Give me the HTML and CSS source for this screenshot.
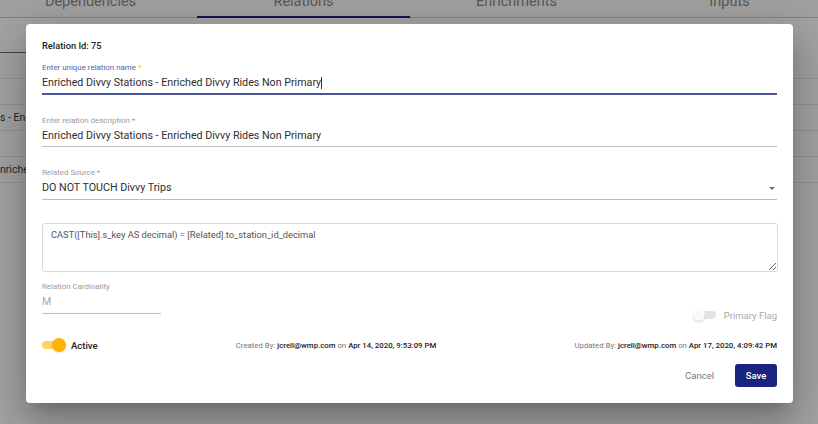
FILE: index.html
```html
<!DOCTYPE html>
<html>
<head>
<meta charset="utf-8">
<link rel="stylesheet" href="styles.css">
</head>
<body>
<div class="page">
  <div class="tabs">
    <div class="tab">Dependencies</div>
    <div class="tab active">Relations</div>
    <div class="tab">Enrichments</div>
    <div class="tab">Inputs</div>
  </div>
  <div class="toolbar"><span class="search"></span></div>
  <div class="table">
    <div class="row head"></div>
    <div class="row"></div>
    <div class="row"><span class="cell">s - Enri</span></div>
    <div class="row"></div>
    <div class="row"><span class="cell">nriche</span></div>
  </div>
</div>
<div class="overlay"></div>
<div class="dialog">
  <div class="title">Relation Id: 75</div>

  <div class="field focused">
    <div class="label">Enter unique relation name <span class="req">*</span></div>
    <div class="value">Enriched Divvy Stations - Enriched Divvy Rides Non Primary<span class="caret"></span></div>
  </div>

  <div class="field">
    <div class="label">Enter relation description *</div>
    <div class="value">Enriched Divvy Stations - Enriched Divvy Rides Non Primary</div>
  </div>

  <div class="field select">
    <div class="label">Related Source *</div>
    <div class="value"><span>DO NOT TOUCH Divvy Trips</span><span class="arrow"></span></div>
  </div>

  <textarea class="expr" readonly>CAST([This].s_key AS decimal) = [Related].to_station_id_decimal</textarea>

  <div class="row-card">
    <div class="field small disabled">
      <div class="label">Relation Cardinality</div>
      <div class="value">M</div>
    </div>
    <div class="flag">
      <span class="switch off"><span class="knob"></span></span>
      <span class="flag-text">Primary Flag</span>
    </div>
  </div>

  <div class="meta-row">
    <div class="active">
      <span class="switch on"><span class="knob"></span></span>
      <span class="active-text">Active</span>
    </div>
    <div class="meta"><span class="k">Created By:</span> <b>jcrell@wmp.com</b> <span class="k">on</span> <b>Apr 14, 2020, 9:53:09 PM</b></div>
    <div class="meta"><span class="k">Updated By:</span> <b>jcrell@wmp.com</b> <span class="k">on</span> <b>Apr 17, 2020, 4:09:42 PM</b></div>
  </div>

  <div class="actions">
    <button class="btn cancel">Cancel</button>
    <button class="btn save">Save</button>
  </div>
</div>
</body>
</html>
```
FILE: styles.css
```css
* { box-sizing: border-box; }
html, body {
  margin: 0;
  width: 818px;
  height: 424px;
  overflow: hidden;
  font-family: Roboto, "Liberation Sans", sans-serif;
  background: #fff;
}
body { position: relative; }

.page { width: 818px; }
.tabs {
  display: flex;
  margin-top: -15px;
  margin-left: -16px;
  height: 33px;
  border-bottom: 1px solid #c8c8c8;
  background: #fafafa;
}
.tab {
  width: 213px;
  flex: none;
  display: flex;
  align-items: center;
  justify-content: center;
  font-size: 14.5px;
  color: #8a8a8a;
  position: relative;
}
.tab.active::after {
  content: "";
  position: absolute;
  left: 0; right: 0; bottom: -1px;
  height: 2px;
  background: #1a237e;
}
.toolbar {
  height: 35px;
  display: flex;
  align-items: flex-end;
}
.search {
  width: 200px;
  height: 1px;
  background: #666;
}
.table { display: flex; flex-direction: column; }
.row {
  height: 26px;
  border-bottom: 1px solid #e3e3e3;
  display: flex;
  align-items: center;
  font-size: 10.5px;
  color: #3a3a3a;
}
.row.head { background: #fdfdfd; }
.cell { white-space: nowrap; width: 26px; overflow: hidden; }

.overlay {
  position: absolute;
  inset: 0;
  background: rgba(0,0,0,0.36);
}

.dialog {
  position: absolute;
  left: 26px;
  top: 24px;
  width: 767px;
  height: 379px;
  background: #fff;
  border-radius: 4px;
  box-shadow: 0 11px 15px -7px rgba(0,0,0,.2), 0 24px 38px 3px rgba(0,0,0,.14), 0 9px 46px 8px rgba(0,0,0,.12);
  padding: 16px 16px 0 16px;
  display: flex;
  flex-direction: column;
}
.title {
  font-size: 9.3px;
  font-weight: 500;
  line-height: 12px;
  color: #222;
}
.field { display: flex; flex-direction: column; margin-top: 21px; }
.field.focused { margin-top: 11px; }
.label {
  font-size: 7.9px;
  line-height: 10px;
  color: #9a9a9a;
}
.focused .label { color: #5560a8; }
.req { color: #f5c518; }
.value {
  margin-top: 3px;
  font-size: 10.7px;
  line-height: 14px;
  color: #2e2e2e;
  padding-bottom: 3px;
  border-bottom: 1px solid #bdbdbd;
  display: flex;
  align-items: center;
  white-space: nowrap;
}
.focused .value { border-bottom: 2px solid #4c5597; }
.caret {
  display: inline-block;
  width: 1px;
  height: 12px;
  background: #333;
}
.select .value { justify-content: space-between; padding-bottom: 4px; }
.arrow {
  width: 0; height: 0;
  border-left: 3.5px solid transparent;
  border-right: 3.5px solid transparent;
  border-top: 3.5px solid #6f6f6f;
  margin-right: 2px;
}
.expr {
  margin-top: 23px;
  height: 49px;
  width: 736px;
  border: 1px solid #d9d9d9;
  border-radius: 3px;
  padding: 5px 8px;
  font-family: Roboto, "Liberation Sans", sans-serif;
  font-size: 9.3px;
  line-height: 12px;
  color: #555;
  outline: none;
  display: block;
}
.row-card {
  display: flex;
  justify-content: space-between;
  align-items: flex-start;
}
.field.small { width: 119px; margin-top: 10px; }
.disabled .value { color: #a8a8a8; padding-bottom: 4px; }
.flag {
  margin-top: 37px;
  display: flex;
  align-items: center;
  height: 12px;
}
.switch {
  position: relative;
  display: inline-block;
  width: 20px;
  height: 8px;
  border-radius: 4px;
}
.knob {
  position: absolute;
  top: 50%;
  border-radius: 50%;
}
.switch.off { background: #e3e3e3; margin-right: 8px; }
.switch.off .knob {
  left: -3px;
  width: 12px; height: 12px;
  margin-top: -6px;
  background: #fafafa;
  box-shadow: 0 1px 2px rgba(0,0,0,.18);
}
.flag-text { font-size: 9.5px; color: #a9a9a9; }

.meta-row {
  margin-top: 17px;
  display: flex;
  justify-content: space-between;
  align-items: center;
  height: 14px;
}
.active { display: flex; align-items: center; }
.switch.on { background: #fcd46e; margin-right: 9px; }
.switch.on .knob {
  left: 10px;
  width: 14px; height: 14px;
  margin-top: -7px;
  background: #ffb300;
  box-shadow: 0 1px 2px rgba(0,0,0,.12);
}
.active-text { font-size: 9.5px; font-weight: 500; color: #222; }
.meta { font-size: 7.8px; color: #222; white-space: nowrap; }
.meta .k { color: #777; }
.meta b { font-weight: 500; }

.actions {
  margin-top: 12px;
  display: flex;
  justify-content: flex-end;
  align-items: center;
  gap: 13px;
}
.btn {
  font-family: Roboto, "Liberation Sans", sans-serif;
  border: none;
  border-radius: 3px;
  font-size: 9.5px;
  height: 23px;
  cursor: pointer;
}
.cancel { background: transparent; color: #777; padding: 0 8px; }
.save { background: #1a237e; color: #fff; font-weight: 500; width: 42px; padding: 0; }
```
